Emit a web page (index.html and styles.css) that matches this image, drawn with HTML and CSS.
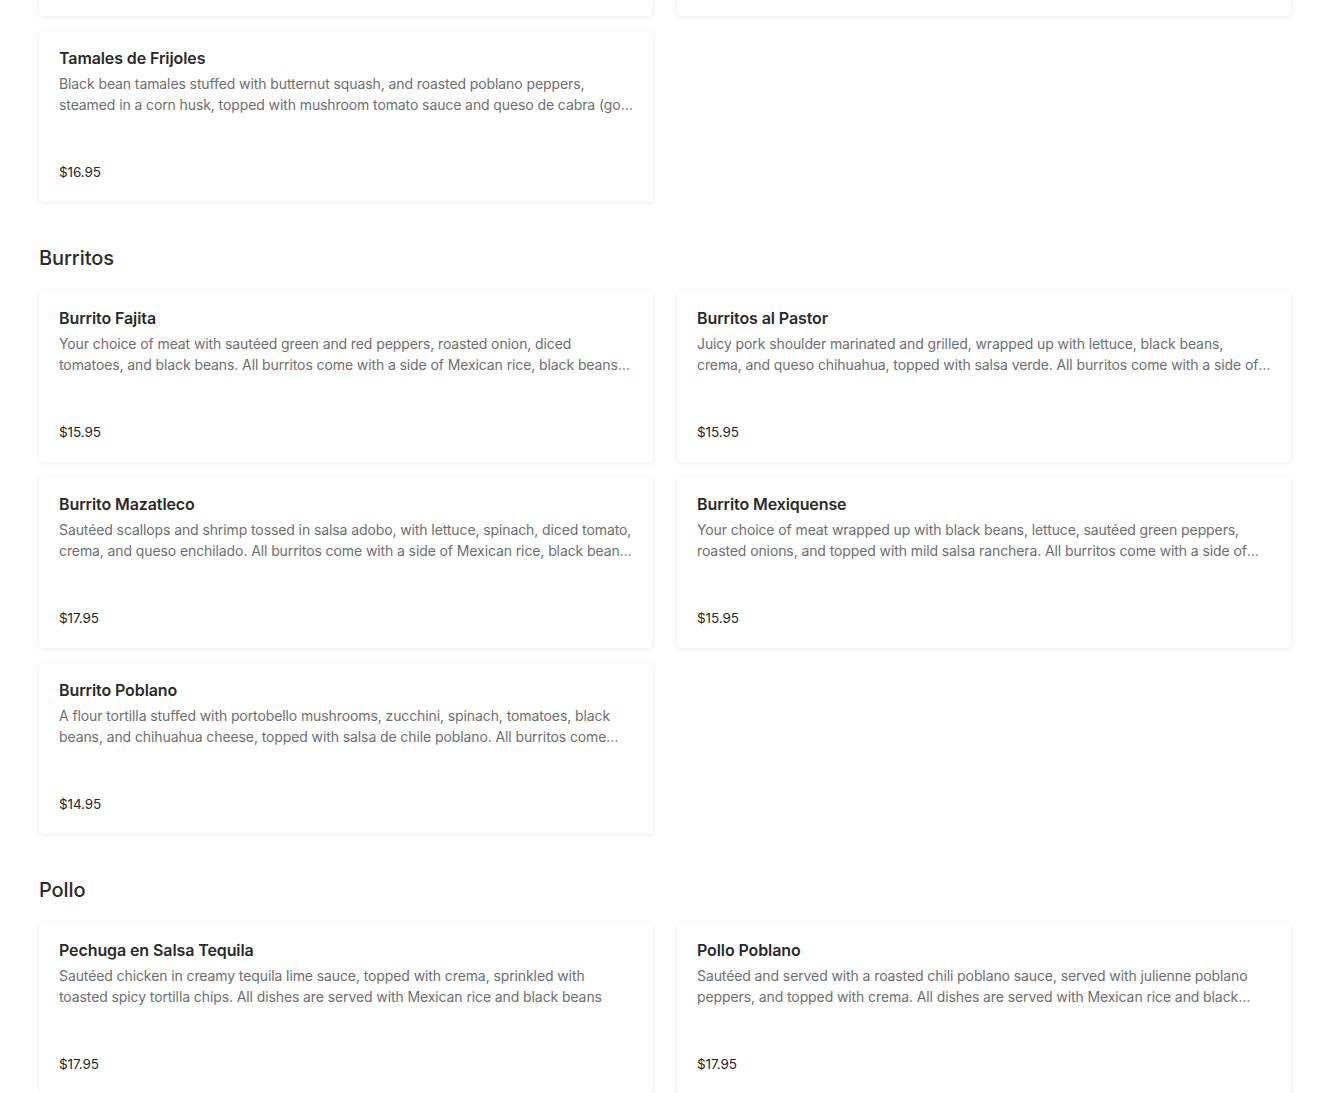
FILE: index.html
```html
<!DOCTYPE html>
<html lang="en">
<head>
<meta charset="utf-8">
<title>Menu</title>
<link rel="stylesheet" href="styles.css">
</head>
<body>
<main class="menu">
  <section class="section section-cut">
    <div class="grid">
      <div class="card"></div>
      <div class="card"></div>
      <article class="card">
        <h3 class="item-name">Tamales de Frijoles</h3>
        <p class="item-desc">Black bean tamales stuffed with butternut squash, and roasted poblano peppers, steamed in a corn husk, topped with mushroom tomato sauce and queso de cabra (goat cheese). All dishes are served with Mexican rice and black beans</p>
        <div class="item-price">$16.95</div>
      </article>
    </div>
  </section>

  <section class="section">
    <h2 class="section-title">Burritos</h2>
    <div class="grid">
      <article class="card">
        <h3 class="item-name">Burrito Fajita</h3>
        <p class="item-desc">Your choice of meat with sautéed green and red peppers, roasted onion, diced tomatoes, and black beans. All burritos come with a side of Mexican rice, black beans and salad.</p>
        <div class="item-price">$15.95</div>
      </article>
      <article class="card">
        <h3 class="item-name">Burritos al Pastor</h3>
        <p class="item-desc">Juicy pork shoulder marinated and grilled, wrapped up with lettuce, black beans, crema, and queso chihuahua, topped with salsa verde. All burritos come with a side of Mexican rice, black beans and salad.</p>
        <div class="item-price">$15.95</div>
      </article>
      <article class="card">
        <h3 class="item-name">Burrito Mazatleco</h3>
        <p class="item-desc">Sautéed scallops and shrimp tossed in salsa adobo, with lettuce, spinach, diced tomato, crema, and queso enchilado. All burritos come with a side of Mexican rice, black beans and salad.</p>
        <div class="item-price">$17.95</div>
      </article>
      <article class="card">
        <h3 class="item-name">Burrito Mexiquense</h3>
        <p class="item-desc">Your choice of meat wrapped up with black beans, lettuce, sautéed green peppers, roasted onions, and topped with mild salsa ranchera. All burritos come with a side of Mexican rice, black beans and salad.</p>
        <div class="item-price">$15.95</div>
      </article>
      <article class="card">
        <h3 class="item-name">Burrito Poblano</h3>
        <p class="item-desc">A flour tortilla stuffed with portobello mushrooms, zucchini, spinach, tomatoes, black beans, and chihuahua cheese, topped with salsa de chile poblano. All burritos come with a side of Mexican rice, black beans and salad.</p>
        <div class="item-price">$14.95</div>
      </article>
    </div>
  </section>

  <section class="section">
    <h2 class="section-title">Pollo</h2>
    <div class="grid">
      <article class="card">
        <h3 class="item-name">Pechuga en Salsa Tequila</h3>
        <p class="item-desc">Sautéed chicken in creamy tequila lime sauce, topped with crema, sprinkled with toasted spicy tortilla chips. All dishes are served with Mexican rice and black beans</p>
        <div class="item-price">$17.95</div>
      </article>
      <article class="card">
        <h3 class="item-name">Pollo Poblano</h3>
        <p class="item-desc">Sautéed and served with a roasted chili poblano sauce, served with julienne poblano peppers, and topped with crema. All dishes are served with Mexican rice and black beans</p>
        <div class="item-price">$17.95</div>
      </article>
    </div>
  </section>
</main>
</body>
</html>
```

FILE: styles.css
```css
* { box-sizing: border-box; }

body {
  margin: 0;
  background: #ffffff;
  font-family: "Inter", "Noto Sans", sans-serif;
  letter-spacing: -0.1px;
  color: #2b2b2b;
}

.menu {
  padding: 0 39px;
}

.section-cut {
  margin-top: -155px;
}

.section-title {
  margin: 43px 0 20px;
  font-size: 20px;
  line-height: 26px;
  font-weight: 500;
  color: #2b2b2b;
}

.grid {
  display: grid;
  grid-template-columns: 1fr 1fr;
  column-gap: 24px;
  row-gap: 15px;
}

.card {
  height: 171px;
  padding: 17px 20px 21px;
  background: #fff;
  border-radius: 4px;
  box-shadow: 0 1px 5px rgba(0, 0, 0, 0.07), 0 0 1px rgba(0, 0, 0, 0.04);
  display: flex;
  flex-direction: column;
}

.item-name {
  margin: 0 0 5px;
  font-size: 16px;
  line-height: 20px;
  font-weight: 600;
  color: #2a2a2a;
}

.item-desc {
  margin: 0;
  font-size: 14px;
  line-height: 21px;
  color: #6e6e6e;
  display: -webkit-box;
  -webkit-line-clamp: 2;
  -webkit-box-orient: vertical;
  overflow: hidden;
}

.item-price {
  margin-top: auto;
  font-size: 13.5px;
  line-height: 18px;
  color: #262626;
}
```
